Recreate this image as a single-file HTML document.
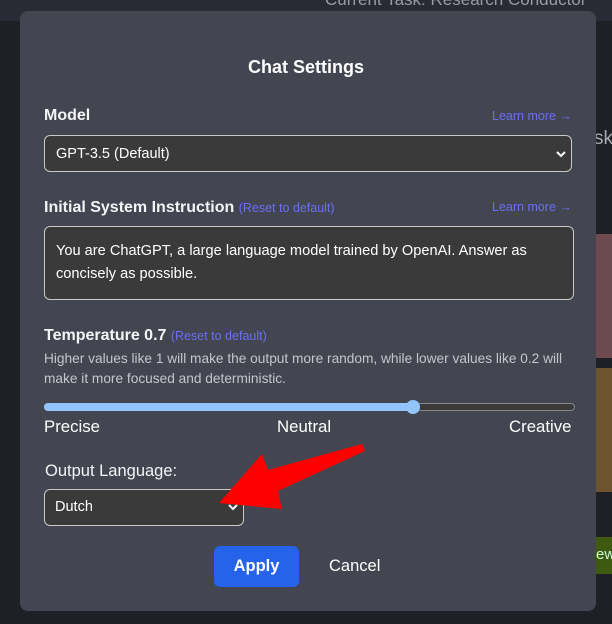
<!DOCTYPE html>
<html><head><style>
body{margin:0;width:612px;height:624px;background:#1f1f26;font-family:"Liberation Sans",sans-serif;position:relative;overflow:hidden;color:#fff}
.a{position:absolute;white-space:nowrap}
.link{color:#6b6ff5;font-size:12.5px;font-weight:normal}
.box{position:absolute;background:#3a3a3a;border:1px solid #c8c8c8;border-radius:6px;box-sizing:border-box}
.lb{font-size:16px;font-weight:bold;color:#f4f4f6}
</style></head><body>
<div class="a" style="left:0;top:0;width:612px;height:21px;background:#292a33"></div>
<div class="a" style="left:325px;top:-10px;font-size:17px;color:#9a9aa3">Current Task: Research Conductor</div>
<div class="a" style="left:594px;top:128px;font-size:19px;color:#a9a9b0">sk</div>
<div class="a" style="left:596px;top:234px;width:16px;height:124px;background:#6d4a4f"></div>
<div class="a" style="left:596px;top:368px;width:16px;height:124px;background:#6d532f"></div>
<div class="a" style="left:596px;top:537px;width:16px;height:37px;background:#3d5a10"></div>
<div class="a" style="left:596px;top:546px;font-size:15px;color:#cfd">ew</div>

<div class="a" style="left:20px;top:11px;width:576px;height:600px;background:#434550;border-radius:8px"></div>
<div class="a" style="left:0;width:612px;top:57px;text-align:center;font-size:18px;font-weight:bold">Chat Settings</div>

<div class="a lb" style="left:44px;top:107px">Model</div>
<div class="a link" style="left:492px;top:109px">Learn more →</div>
<div class="box" style="left:44px;top:135px;width:528px;height:37px"></div>
<div class="a" style="left:56px;top:146px;font-size:14.5px">GPT-3.5 (Default)</div>
<svg class="a" style="left:556px;top:150px" width="10" height="8"><polyline points="1,2 5,6 9,2" fill="none" stroke="#fff" stroke-width="2"/></svg>

<div class="a lb" style="left:44px;top:199px">Initial System Instruction <span class="link">(Reset to default)</span></div>
<div class="a link" style="left:492px;top:200px">Learn more →</div>
<div class="box" style="left:44px;top:226px;width:530px;height:74px"></div>
<div class="a" style="left:56px;top:240px;font-size:14.6px;line-height:23px">You are ChatGPT, a large language model trained by OpenAI. Answer as<br>concisely as possible.</div>

<div class="a lb" style="left:44px;top:327px">Temperature 0.7 <span class="link">(Reset to default)</span></div>
<div class="a" style="left:44px;top:349px;font-size:13.7px;line-height:20px;color:#c5c6cc">Higher values like 1 will make the output more random, while lower values like 0.2 will<br>make it more focused and deterministic.</div>
<div class="a" style="left:44px;top:403px;width:531px;height:8px;background:#3a3a3a;border:1px solid #888;border-radius:5px;box-sizing:border-box"></div>
<div class="a" style="left:44px;top:403px;width:370px;height:8px;background:#93c5fd;border-radius:5px"></div>
<div class="a" style="left:406px;top:400px;width:14px;height:14px;background:#93c5fd;border-radius:50%"></div>
<div class="a" style="left:44px;top:417px;font-size:16.8px">Precise</div>
<div class="a" style="left:277px;top:417px;font-size:16.8px">Neutral</div>
<div class="a" style="left:509px;top:417px;font-size:16.8px">Creative</div>

<div class="a" style="left:45px;top:462px;font-size:16.5px;color:#f4f4f6">Output Language:</div>
<div class="box" style="left:44px;top:489px;width:200px;height:37px"></div>
<div class="a" style="left:55px;top:499px;font-size:14.5px">Dutch</div>

<div class="a" style="left:214px;top:546px;width:85px;height:41px;background:#2563eb;border-radius:6px"></div>
<div class="a" style="left:214px;top:557px;width:85px;text-align:center;font-size:16.5px;font-weight:bold">Apply</div>
<div class="a" style="left:329px;top:557px;font-size:16.5px">Cancel</div>

<svg class="a" style="left:0;top:0" width="612" height="624">
<polyline points="229,505 233,509 237,505" fill="none" stroke="#fff" stroke-width="2"/>
<polygon points="219,503 262,454 268,470 362,444 365,451 278,491 282,509" fill="#ff0000"/>
</svg>
</body></html>
